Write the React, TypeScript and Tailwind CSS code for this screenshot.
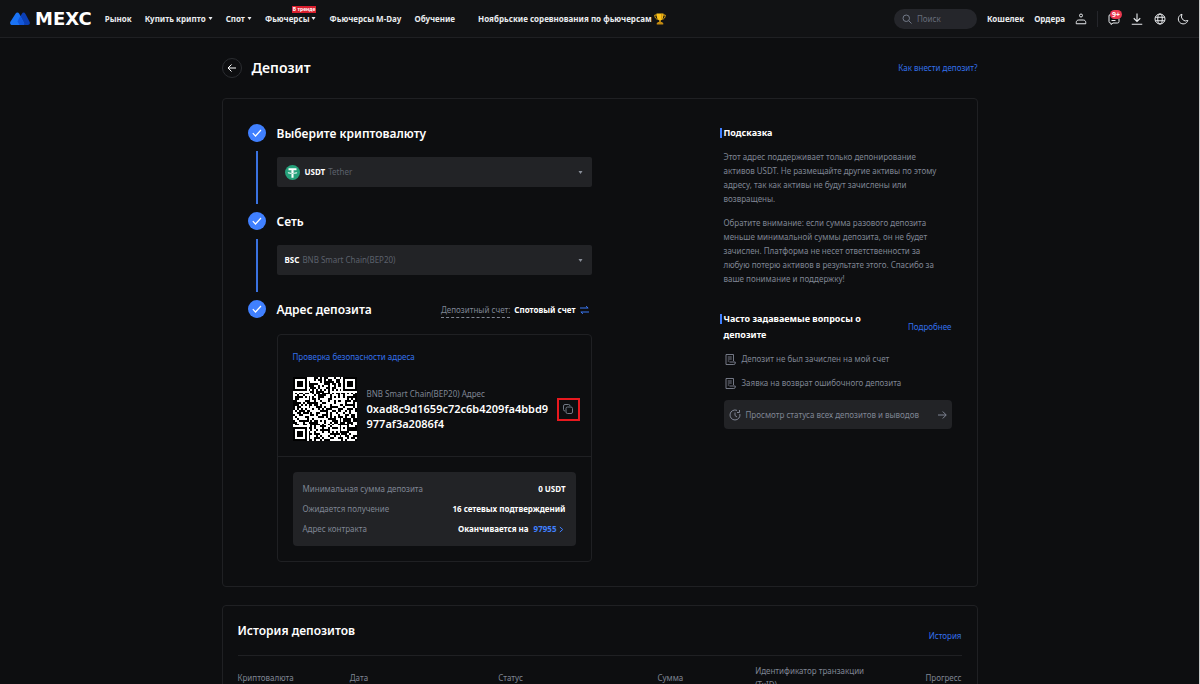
import React from "react"

interface StepProps {
    title: string,
    last?: boolean,
    extra?: React.ReactNode,
    children: React.ReactNode,
}

interface PickerProps {
    label: string,
    code: string,
    name: string,
    icon?: React.ReactNode,
}

const Caret: React.FC<{ className?: string }> = ({ className = "" }) => (
    <svg viewBox="0 0 6 4" className={`h-[3px] w-[5px] ${className}`} fill="currentColor">
        <path d="M0.3 0h5.4L3 4z" />
    </svg>
)

const Logo = () => (
    <a href="#" className="flex items-center gap-[5px]">
        <svg viewBox="0 0 40 26" className="h-[13px] w-5">
            <path d="M23.500 3.800c1.900-3.500 5.500-3.500 7.500 0l8.200 15.700c1.500 3.200 0 6.500-3.500 6.500H19L15 17z" fill="#0b3fb5" />
            <path d="M11 3.500c2-3.600 5.600-3.600 7.600 0L28 22c1 2.200.2 4-2.500 4H4.500C1 26-.8 22.800.8 19.500z" fill="#1a73f5" />
            <path d="M20.500 8l7.500 14c1 2.200.2 4-2.500 4H19l-4-7z" fill="#1257dc" />
        </svg>
        <span className="font-['DejaVu_Sans'] text-[18px] leading-5 font-bold text-white">MEXC</span>
    </a>
)

const Trophy = () => (
    <svg viewBox="0 0 24 24" className="h-3 w-3" fill="none">
        <path d="M6 4H1.500c0 5 2 8 6 8.500M18 4h4.500c0 5-2 8-6 8.500" stroke="#e0a512" strokeWidth="2" />
        <path d="M5 1h14c0 8-2 14-7 14S5 9 5 1z" fill="#fbc21b" />
        <path d="M14 2h3c0 6-1 9-3 11z" fill="#d99a0b" />
        <path d="M10.500 14h3v5h-3z" fill="#e0a512" />
        <path d="M7 18h10v2h1.500v3h-13v-3H7z" fill="#c48a10" />
    </svg>
)

const SearchIcon = () => (
    <svg viewBox="0 0 20 20" className="h-[10px] w-[10px] shrink-0 text-[#737a89]" fill="none" stroke="currentColor" strokeWidth="2">
        <circle cx="8.500" cy="8.500" r="6.500" />
        <path d="M13.500 13.500L19 19" />
    </svg>
)

const UserIcon = () => (
    <svg viewBox="0 0 24 24" className="h-3 w-3" fill="none" stroke="currentColor" strokeWidth="2">
        <circle cx="12" cy="5" r="3" />
        <path d="M2.500 21.500v-2.500c0-3 2-5 5-5h9c3 0 5 2 5 5v2.500z" />
    </svg>
)

const ChatIcon = () => (
    <svg viewBox="0 0 24 24" className="h-3 w-3" fill="none" stroke="currentColor" strokeWidth="2">
        <path d="M14 3H5a3 3 0 0 0-3 3v11a3 3 0 0 0 3 3h1v3l4-3h9a3 3 0 0 0 3-3v-6" />
        <path d="M7 15h8" />
    </svg>
)

const DownloadIcon = () => (
    <svg viewBox="0 0 24 24" className="h-3 w-3" fill="none" stroke="currentColor" strokeWidth="2.200">
        <path d="M12 1v16M5.500 10.500L12 17l6.500-6.500M1.500 22.500h21" />
    </svg>
)

const GlobeIcon = () => (
    <svg viewBox="0 0 24 24" className="h-3 w-3" fill="none" stroke="currentColor" strokeWidth="2">
        <circle cx="12" cy="12" r="10" />
        <ellipse cx="12" cy="12" rx="4.500" ry="10" />
        <path d="M2.500 8.500h19M2.500 15.500h19" />
    </svg>
)

const MoonIcon = () => (
    <svg viewBox="0 0 24 24" className="h-3 w-3" fill="none" stroke="currentColor" strokeWidth="2">
        <path d="M10 2.500A9.800 9.800 0 1 0 21.800 15 9 9 0 0 1 10 2.500z" />
    </svg>
)

const TetherIcon = () => (
    <svg viewBox="0 0 32 32" className="h-[15px] w-[15px]">
        <circle cx="16" cy="16" r="16" fill="#26a17b" />
        <path d="M7.500 7h17v4.300h-6.300v3c4.600.3 8 1.200 8 2.400s-3.400 2.200-8 2.400V27h-4.400v-7.900c-4.600-.2-8-1.200-8-2.400s3.400-2.100 8-2.400v-3H7.500z" fill="#fff" />
        <path d="M7.500 16.700c1 .8 4.500 1.300 8.500 1.300s7.500-.5 8.500-1.300c-.8-.7-3-1.100-6.300-1.300v1.500h-4.400v-1.500c-3.300.2-5.500.6-6.300 1.300z" fill="#26a17b" />
    </svg>
)

const SwapIcon = () => (
    <svg viewBox="0 0 18 16" className="h-2 w-[9px] text-[#3b78f5]" fill="none" stroke="currentColor" strokeWidth="2">
        <path d="M0 4h16M12 0.500L16.500 4M18 12H2M6 15.500L1.500 12" />
    </svg>
)

const CopyIcon = () => (
    <svg viewBox="0 0 20 20" className="h-[10px] w-[10px]" fill="none" stroke="currentColor" strokeWidth="2">
        <rect x="6" y="6" width="13" height="13" rx="3" />
        <path d="M4 14a3 3 0 0 1-3-3V4a3 3 0 0 1 3-3h7a3 3 0 0 1 3 3" />
    </svg>
)

const DocIcon = () => (
    <svg viewBox="0 0 22 22" className="h-[11px] w-[11px] shrink-0" fill="none" stroke="currentColor" strokeWidth="1.800">
        <path d="M17 14V1H2v20h15.500a3 3 0 0 0 3-3v-2H9" />
        <path d="M5.500 6h8M5.500 10h8M5.500 14h3" />
    </svg>
)

const ClockIcon = () => (
    <svg viewBox="0 0 24 24" className="h-3 w-3 shrink-0" fill="none" stroke="currentColor" strokeWidth="2">
        <path d="M16 2.800A10 10 0 1 0 21.800 10" />
        <path d="M21 2v5h-5M12 7v6l4 3" />
    </svg>
)

const SIZE = 33

const isDark = (x: number, y: number) => {
    const finders = [[0, 0], [SIZE - 7, 0], [0, SIZE - 7]]
    for (const [fx, fy] of finders) {
        const d = Math.max(Math.abs(x - fx - 3), Math.abs(y - fy - 3))
        if (d <= 4) return d === 3 || d <= 1
    }
    // alignment square
    const a = Math.max(Math.abs(x - 26), Math.abs(y - 26))
    if (a <= 2) return a !== 1
    // timing rows
    if (y === 6) return x % 2 === 0
    if (x === 6) return y % 2 === 0
    let h = (x * 374761393 + y * 668265263) | 0
    h = Math.imul(h ^ (h >>> 13), 1274126177)
    return ((h ^ (h >>> 16)) & 1) === 1
}

const QrCode = () => {
    let d = ""
    for (let y = 0; y < SIZE; y++) {
        for (let x = 0; x < SIZE; x++) {
            if (!isDark(x, y)) d += `M${x} ${y}h1v1h-1z`
        }
    }
    return (
        <svg viewBox="0 0 33 33" className="h-16 w-16 shrink-0 bg-black" shapeRendering="crispEdges">
            <path d={d} fill="#fff" />
        </svg>
    )
}

const Step: React.FC<StepProps> = ({ title, last, extra, children }) => (
    <li className="flex gap-[11px]">
        <div className="flex flex-col items-center">
            <span className="flex h-[18px] w-[18px] items-center justify-center rounded-full bg-[#4080ff]">
                <svg viewBox="0 0 10 8" className="h-2 w-[10px]" fill="none" stroke="#fff" strokeWidth="1.200">
                    <path d="M0.800 4.200L3.500 7L9 1" />
                </svg>
            </span>
            {!last && <span className="mt-[9px] mb-2 w-0.5 flex-1 bg-[#3a72e0]" />}
        </div>
        <div className={last ? "flex-1" : "flex-1 pb-[25px]"}>
            <div className="flex h-5 items-center justify-between">
                <h2 className="text-[12px] font-semibold text-white">{title}</h2>
                {extra}
            </div>
            {children}
        </div>
    </li>
)

const Picker: React.FC<PickerProps> = (props) => (
    <label className="relative mt-[13px] flex h-[30px] items-center rounded-xs bg-[#222326] px-2">
        {props.icon && <span className="mr-[5px]">{props.icon}</span>}
        <span className="font-bold text-white">{props.code}</span>
        <span className="ml-[3px] text-[#5c616c]">{props.name}</span>
        <Caret className="mr-px ml-auto text-[#8a8f99]" />
        <select aria-label={props.label} className="absolute inset-0 cursor-pointer opacity-0">
            <option>{props.code} {props.name}</option>
        </select>
    </label>
)

const Header = () => (
    <header className="flex h-[38px] items-center border-b border-[#1f2023] bg-[#111214] pr-[10px] pl-[10px] font-bold text-[#eaecef]">
        <Logo />
        <nav className="ml-[13px] flex items-center gap-[13px] whitespace-nowrap">
            <a href="#">Рынок</a>
            <a href="#" className="flex items-center gap-0.5">Купить крипто <Caret /></a>
            <a href="#" className="flex items-center gap-0.5">Спот <Caret /></a>
            <a href="#" className="relative flex items-center gap-0.5">
                Фьючерсы <Caret />
                <span className="absolute -top-1.5 right-0 bg-[#d91f2e] px-px text-[5px] leading-[7px] text-white">В тренде</span>
            </a>
            <a href="#">Фьючерсы M-Day</a>
            <a href="#">Обучение</a>
            <a href="#" className="ml-[10px] flex items-center gap-0.5">Ноябрьские соревнования по фьючерсам <Trophy /></a>
        </nav>
        <div className="ml-auto flex items-center whitespace-nowrap">
            <label className="flex h-5 w-[83px] items-center gap-[5px] rounded-full bg-[#25262b] px-2 font-normal">
                <SearchIcon />
                <input type="text" aria-label="Поиск" placeholder="Поиск" className="w-full min-w-0 bg-transparent outline-none placeholder:text-[#666c7a]" />
            </label>
            <a href="#" className="ml-[10px]">Кошелек</a>
            <a href="#" className="ml-[10px]">Ордера</a>
            <button aria-label="Профиль" className="ml-[10px]"><UserIcon /></button>
            <span className="mx-[10px] h-4 w-px bg-[#25262b]" />
            <div className="flex gap-[11px]">
                <button aria-label="Сообщения" className="relative">
                    <ChatIcon />
                    <span className="absolute -top-[3px] left-0.5 rounded-full bg-[#e8384f] px-0.5 text-[7px] leading-[9px] text-white">9+</span>
                </button>
                <button aria-label="Скачать"><DownloadIcon /></button>
                <button aria-label="Язык"><GlobeIcon /></button>
                <button aria-label="Тема"><MoonIcon /></button>
            </div>
        </div>
    </header>
)

const AddressCard = () => (
    <div className="mt-[14px] rounded-sm border border-[#1f2023]">
        <div className="border-b border-[#1f2023] pt-4 pr-[11px] pb-[15px] pl-[15px]">
            <a href="#" className="block leading-3 text-[#3370eb]">Проверка безопасности адреса</a>
            <div className="mt-[14px] flex items-center">
                <QrCode />
                <div className="ml-[10px] w-[184px]">
                    <p className="text-[#7f8593]">BNB Smart Chain(BEP20) Адрес</p>
                    <p className="text-[11px] leading-[15px] font-semibold break-all text-white">0xad8c9d1659c72c6b4209fa4bbd9977af3a2086f4</p>
                </div>
                <button aria-label="Скопировать" className="ml-auto flex h-[23px] w-[23px] items-center justify-center border-2 border-[#e8191f] text-[#737a86]">
                    <CopyIcon />
                </button>
            </div>
        </div>
        <dl className="m-[15px] flex flex-col gap-1.5 rounded-sm bg-[#222326] px-[10px] py-[10px]">
            <div className="flex justify-between">
                <dt className="text-[#7f8593]">Минимальная сумма депозита</dt>
                <dd className="font-bold text-white">0 USDT</dd>
            </div>
            <div className="flex justify-between">
                <dt className="text-[#7f8593]">Ожидается получение</dt>
                <dd className="font-bold text-white">16 сетевых подтверждений</dd>
            </div>
            <div className="flex justify-between">
                <dt className="text-[#7f8593]">Адрес контракта</dt>
                <dd className="flex items-center font-bold text-white">
                    Оканчивается на
                    <a href="#" className="mr-0.5 ml-[5px] flex items-center gap-0.5 text-[#4080ff]">
                        97955
                        <svg viewBox="0 0 6 8" className="h-[7px] w-[5px]" fill="none" stroke="currentColor" strokeWidth="1.200">
                            <path d="M1 1l3.500 3L1 7" />
                        </svg>
                    </a>
                </dd>
            </div>
        </dl>
    </div>
)

const Tips = () => (
    <aside className="w-[232px] text-[#7f8593]">
        <h3 className="mt-px flex items-center text-[9px] leading-4 font-bold text-white">
            <span className="mr-0.5 h-[10px] w-0.5 bg-[#4080ff]" />Подсказка
        </h3>
        <div className="ml-1 w-[218px]">
            <p className="mt-[9px]">
                Этот адрес поддерживает только депонирование активов USDT. Не размещайте другие активы по этому адресу, так как активы не будут зачислены или возвращены.
            </p>
            <p className="mt-[10px]">
                Обратите внимание: если сумма разового депозита меньше минимальной суммы депозита, он не будет зачислен. Платформа не несет ответственности за любую потерю активов в результате этого. Спасибо за ваше понимание и поддержку!
            </p>
        </div>
        <div className="mt-[25px] flex items-center justify-between">
            <h3 className="flex w-[160px] text-[9px] leading-4 font-bold text-white">
                <span className="mt-[3px] mr-0.5 h-[10px] w-0.5 shrink-0 bg-[#4080ff]" />Часто задаваемые вопросы о депозите
            </h3>
            <a href="#" className="text-[#3370eb]">Подробнее</a>
        </div>
        <ul className="mt-[9px] ml-[5px] flex flex-col gap-[10px]">
            <li><a href="#" className="flex items-center gap-1.5"><DocIcon />Депозит не был зачислен на мой счет</a></li>
            <li><a href="#" className="flex items-center gap-1.5"><DocIcon />Заявка на возврат ошибочного депозита</a></li>
        </ul>
        <a href="#" className="mt-[10px] ml-1 flex h-[29px] items-center gap-[5px] rounded-sm bg-[#222326] px-[5px] whitespace-nowrap">
            <ClockIcon />
            Просмотр статуса всех депозитов и выводов
            <svg viewBox="0 0 18 16" className="ml-auto h-2 w-[9px] shrink-0" fill="none" stroke="currentColor" strokeWidth="2">
                <path d="M0 8h16M9.500 1l7 7-7 7" />
            </svg>
        </a>
    </aside>
)

const History = () => (
    <section className="mt-[18px] rounded-sm border border-[#1f2023] px-[15px] pt-4 pb-6">
        <div className="flex h-[34px] justify-between border-b border-[#1f2023]">
            <h2 className="text-[12px] leading-[18px] font-semibold text-white">История депозитов</h2>
            <a href="#" className="mt-[7px] text-[#3370eb]">История</a>
        </div>
        <table className="mt-2 w-full table-fixed text-left text-[#7f8593]">
            <thead>
                <tr className="[&>th]:p-0 [&>th]:font-normal">
                    <th className="w-[15.5%]">Криптовалюта</th>
                    <th className="w-[20.5%]">Дата</th>
                    <th className="w-[22%]">Статус</th>
                    <th className="w-[13.5%]">Сумма</th>
                    <th className="w-[17%]">Идентификатор транзакции (TxID)</th>
                    <th className="text-right">Прогресс</th>
                </tr>
            </thead>
        </table>
    </section>
)

const App = () => (
    <div className="min-h-screen border-r border-[#c8c8c8] bg-[#0d0e10] font-['Noto_Sans',sans-serif] text-[8px] leading-[14px]">
        <Header />
        <main className="mx-auto max-w-[756px] pt-5 pb-10">
            <div className="flex h-5 items-center">
                <button aria-label="Назад" className="flex h-5 w-5 items-center justify-center rounded-full border border-[#2b2d31] text-white">
                    <svg viewBox="0 0 18 16" className="h-2 w-[9px]" fill="none" stroke="currentColor" strokeWidth="2">
                        <path d="M18 8H2M9 1L2 8l7 7" />
                    </svg>
                </button>
                <h1 className="ml-[10px] text-[14px] leading-5 font-semibold text-white">Депозит</h1>
                <a href="#" className="ml-auto text-[#3370eb]">Как внести депозит?</a>
            </div>
            <section className="mt-5 flex justify-between rounded-sm border border-[#1f2023] px-[25px] pt-[25px] pb-[24px]">
                <ol className="w-[344px]">
                    <Step title="Выберите криптовалюту">
                        <Picker label="Криптовалюта" code="USDT" name="Tether" icon={<TetherIcon />} />
                    </Step>
                    <Step title="Сеть">
                        <Picker label="Сеть" code="BSC" name="BNB Smart Chain(BEP20)" />
                    </Step>
                    <Step
                        title="Адрес депозита"
                        last
                        extra={
                            <div className="mr-[3px] flex items-center gap-1">
                                <span className="border-b border-dashed border-[#7f8593] text-[#7f8593]">Депозитный счет:</span>
                                <button className="flex items-center gap-1 font-bold text-white">Спотовый счет <SwapIcon /></button>
                            </div>
                        }
                    >
                        <AddressCard />
                    </Step>
                </ol>
                <Tips />
            </section>
            <History />
        </main>
    </div>
)

export default App
